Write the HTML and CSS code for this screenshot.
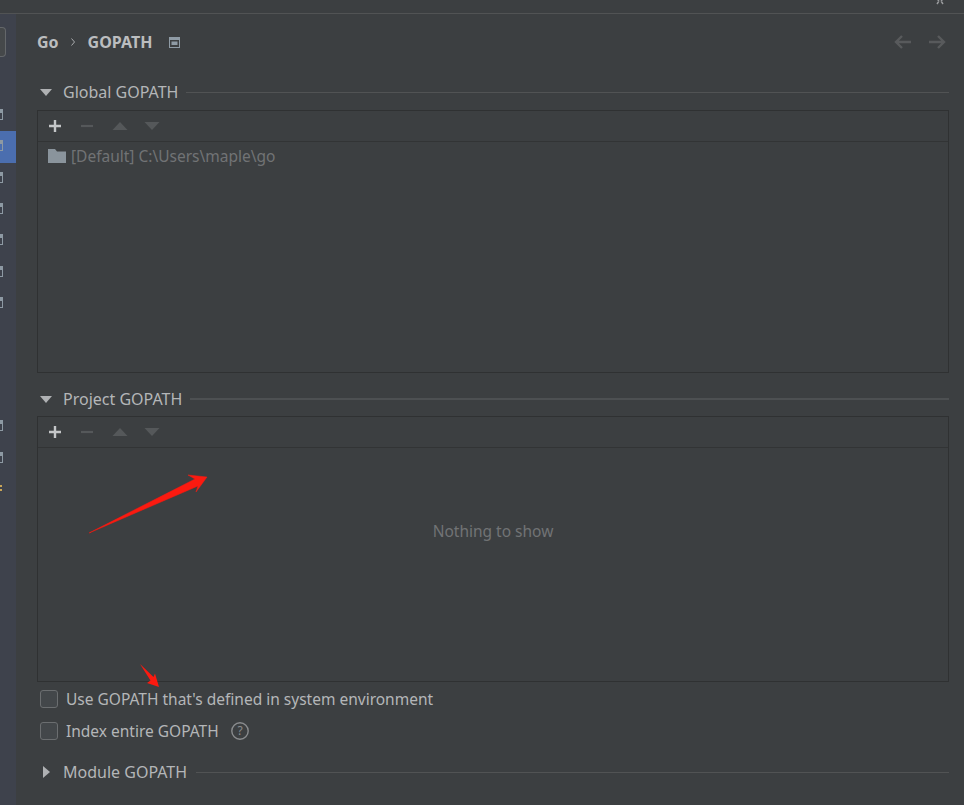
FILE: index.html
```html
<!DOCTYPE html>
<html lang="en">
<head>
<meta charset="utf-8">
<title>GOPATH</title>
<link rel="stylesheet" href="styles.css">
</head>
<body>
<div class="titlebar">
  <svg class="close" width="12" height="5" viewBox="0 0 12 5"><path d="M1 -3 L5 1 M11 -3 L7 1 M5 1 L3 4 M7 1 L9 4" stroke="#9a9c9e" stroke-width="1.4" fill="none"/></svg>
</div>
<div class="window">
  <aside class="sidebar">
    <div class="search"></div>
    <ul class="tree">
      <li class="node"><span class="glyph"></span></li>
      <li class="node selected"><span class="glyph"></span></li>
      <li class="node"><span class="glyph"></span></li>
      <li class="node"><span class="glyph"></span></li>
      <li class="node"><span class="glyph"></span></li>
      <li class="node"><span class="glyph"></span></li>
      <li class="node"><span class="glyph"></span></li>
    </ul>
    <ul class="tree tree-lower">
      <li class="node"><span class="glyph"></span></li>
      <li class="node"><span class="glyph"></span></li>
      <li class="node"><span class="dots"></span></li>
    </ul>
  </aside>
  <main class="main">
    <header class="crumbs">
      <span class="crumb">Go</span>
      <svg class="crumb-sep" width="6" height="10" viewBox="0 0 6 10"><path d="M1.5 1.5 L4.5 5 L1.5 8.5" stroke="#a9abad" stroke-width="1" fill="none"/></svg>
      <span class="crumb">GOPATH</span>
      <svg class="crumb-icon" width="11" height="11" viewBox="0 0 11 11"><rect x="0" y="0" width="11" height="11" fill="#8f9ba5"/><rect x="1" y="3" width="9" height="7" fill="#3c3f41"/><rect x="2.5" y="4.5" width="6" height="3.5" fill="#8f9ba5"/></svg>
      <span class="nav">
        <svg width="18" height="14" viewBox="0 0 18 14"><path d="M17 7 H2 M8 1 L2 7 L8 13" stroke="#585a5c" stroke-width="2.4" fill="none"/></svg>
        <svg width="18" height="14" viewBox="0 0 18 14"><path d="M1 7 H16 M10 1 L16 7 L10 13" stroke="#585a5c" stroke-width="2.4" fill="none"/></svg>
      </span>
    </header>

    <section class="group group-global">
      <div class="group-title">
        <svg class="twisty" width="12" height="7" viewBox="0 0 12 7"><path d="M0 0 H12 L6 7 Z" fill="#afb1b3"/></svg>
        <span>Global GOPATH</span>
        <span class="rule"></span>
      </div>
      <div class="table table-global">
        <div class="toolbar">
          <svg width="14" height="14" viewBox="0 0 14 14"><path d="M7 1 V13 M1 7 H13" stroke="#c4c6c8" stroke-width="2.4"/></svg>
          <svg width="14" height="14" viewBox="0 0 14 14"><path d="M1 7 H13" stroke="#55585a" stroke-width="2.2"/></svg>
          <svg width="16" height="14" viewBox="0 0 16 14"><path d="M0.5 11 L8 3 L15.5 11 Z" fill="#55585a"/></svg>
          <svg width="16" height="14" viewBox="0 0 16 14"><path d="M0.5 3 L8 11 L15.5 3 Z" fill="#55585a"/></svg>
        </div>
        <div class="row">
          <svg width="18" height="14" viewBox="0 0 18 14"><path d="M0 0 H7 L9 2.5 H18 V14 H0 Z" fill="#8a949c"/></svg>
          <span>[Default] C:\Users\maple\go</span>
        </div>
      </div>
    </section>

    <section class="group group-project">
      <div class="group-title">
        <svg class="twisty" width="12" height="7" viewBox="0 0 12 7"><path d="M0 0 H12 L6 7 Z" fill="#afb1b3"/></svg>
        <span>Project GOPATH</span>
        <span class="rule rule-strong"></span>
      </div>
      <div class="table table-project">
        <div class="toolbar">
          <svg width="14" height="14" viewBox="0 0 14 14"><path d="M7 1 V13 M1 7 H13" stroke="#c4c6c8" stroke-width="2.4"/></svg>
          <svg width="14" height="14" viewBox="0 0 14 14"><path d="M1 7 H13" stroke="#55585a" stroke-width="2.2"/></svg>
          <svg width="16" height="14" viewBox="0 0 16 14"><path d="M0.5 11 L8 3 L15.5 11 Z" fill="#55585a"/></svg>
          <svg width="16" height="14" viewBox="0 0 16 14"><path d="M0.5 3 L8 11 L15.5 3 Z" fill="#55585a"/></svg>
        </div>
        <div class="empty">Nothing to show</div>
      </div>
    </section>

    <label class="check check-first"><span class="box"></span><span>Use GOPATH that's defined in system environment</span></label>
    <label class="check"><span class="box"></span><span>Index entire GOPATH</span>
      <svg class="help" width="18" height="18" viewBox="0 0 18 18"><circle cx="9" cy="9" r="8.2" stroke="#8a8c8e" stroke-width="1.4" fill="none"/><text x="9" y="13.2" text-anchor="middle" class="help-mark">?</text></svg>
    </label>

    <section class="group group-module">
      <div class="group-title">
        <svg class="twisty" width="12" height="12" viewBox="0 0 12 12"><path d="M3 0 L10 6 L3 12 Z" fill="#afb1b3"/></svg>
        <span>Module GOPATH</span>
        <span class="rule"></span>
      </div>
    </section>
  </main>
</div>

<svg class="annotation arrow-big" width="122" height="62" viewBox="0 0 122 62"><path d="M0 60 L106 6 L99 2 L118 4 L107 19 L109 13 Z" fill="#fb1a10" stroke="#fb1a10" stroke-width="0.5" stroke-linejoin="round"/></svg>
<svg class="annotation arrow-small" width="22" height="26" viewBox="0 0 22 26"><path d="M1 1 L14.5 14 L16 10.5 L20 24 L8 20 L11.5 17.5 Z" fill="#fb1a10"/></svg>
</body>
</html>
```
FILE: styles.css
```css
* { box-sizing: border-box; }
html, body { margin: 0; height: 100%; }
body {
  position: relative;
  width: 964px;
  height: 805px;
  overflow: hidden;
  background: #3c3f41;
  color: #b4b6b8;
  font-family: "Noto Sans", "Open Sans", sans-serif;
  font-size: 15.5px;
}
.titlebar {
  position: relative;
  height: 14px;
  border-bottom: 1px solid #515354;
}
.close { position: absolute; left: 934px; top: 0; }
.window { display: flex; height: 791px; }

.sidebar {
  flex: 0 0 16px;
  background: #3e424c;
  padding-top: 13px;
  overflow: hidden;
}
.search {
  width: 6px;
  height: 30px;
  border: 1px solid #64676a;
  border-left: 0;
  border-radius: 0 4px 4px 0;
  background: #45484a;
}
.tree { list-style: none; margin: 43px 0 0; padding: 0; }
.tree-lower { margin-top: 92px; }
.node { height: 31.3px; display: flex; align-items: center; padding-bottom: 2px; }
.node.selected { background: #4b6eaf; }
.glyph {
  width: 3px;
  height: 11px;
  border: 1px solid #8d99a3;
  border-left: 0;
  background: linear-gradient(#8d99a3 0 3px, transparent 3px);
}
.dots {
  width: 2px;
  height: 7px;
  background: repeating-linear-gradient(#c9a558 0 2px, transparent 2px 4px);
}

.main { flex: 1; padding: 0 15px 0 21px; min-width: 0; }
.crumbs {
  display: flex;
  align-items: center;
  height: 56px;
  font-weight: 700;
  font-size: 16px;
  color: #bbbdbf;
}
.crumb-sep { margin: 0 12px 0 11px; }
.crumb-icon { margin-left: 17px; }
.nav { margin-left: auto; margin-right: 3px; display: flex; gap: 16px; }

.group-title {
  display: flex;
  align-items: center;
  height: 20px;
  font-size: 16px;
}
.twisty { margin: 0 11px 0 3px; flex: 0 0 auto; }
.rule { flex: 1; height: 1px; background: #515354; margin-left: 8px; }
.rule-strong { height: 2px; background: #4d5052; }
.group-global { margin-top: 12px; }
.group-project { margin-top: 16px; }
.group-module { margin-top: 21px; }
.group-module .twisty { margin-right: 11px; }
.group-module .rule { margin-left: 9px; }

.table {
  margin-top: 8px;
  border: 1px solid #2f3132;
}
.table-global { height: 263px; }
.table-project { height: 266px; margin-top: 7px; }
.toolbar {
  display: flex;
  align-items: center;
  gap: 18px;
  height: 31px;
  padding-left: 10px;
  border-bottom: 1px solid #323435;
}
.toolbar svg:nth-child(4) { margin-left: -2px; }
.row {
  display: flex;
  align-items: center;
  gap: 5px;
  height: 28px;
  padding-left: 10px;
  color: #717375;
}
.empty {
  height: 233px;
  padding-bottom: 68px;
  display: flex;
  align-items: center;
  justify-content: center;
  color: #717375;
}
.check {
  display: flex;
  align-items: center;
  height: 20px;
  margin-top: 12px;
}
.check-first { margin-top: 7px; }
.box {
  width: 18px;
  height: 18px;
  margin: 0 8px 0 3px;
  border: 1px solid #6b6e70;
  border-radius: 3px;
  background: #43474a;
}
.help { margin-left: 12px; }
.help-mark { fill: #8a8c8e; font-size: 12px; font-family: "Noto Sans", sans-serif; }

.annotation { position: absolute; }
.arrow-big { left: 89px; top: 473px; }
.arrow-small { left: 139px; top: 663px; }
```
